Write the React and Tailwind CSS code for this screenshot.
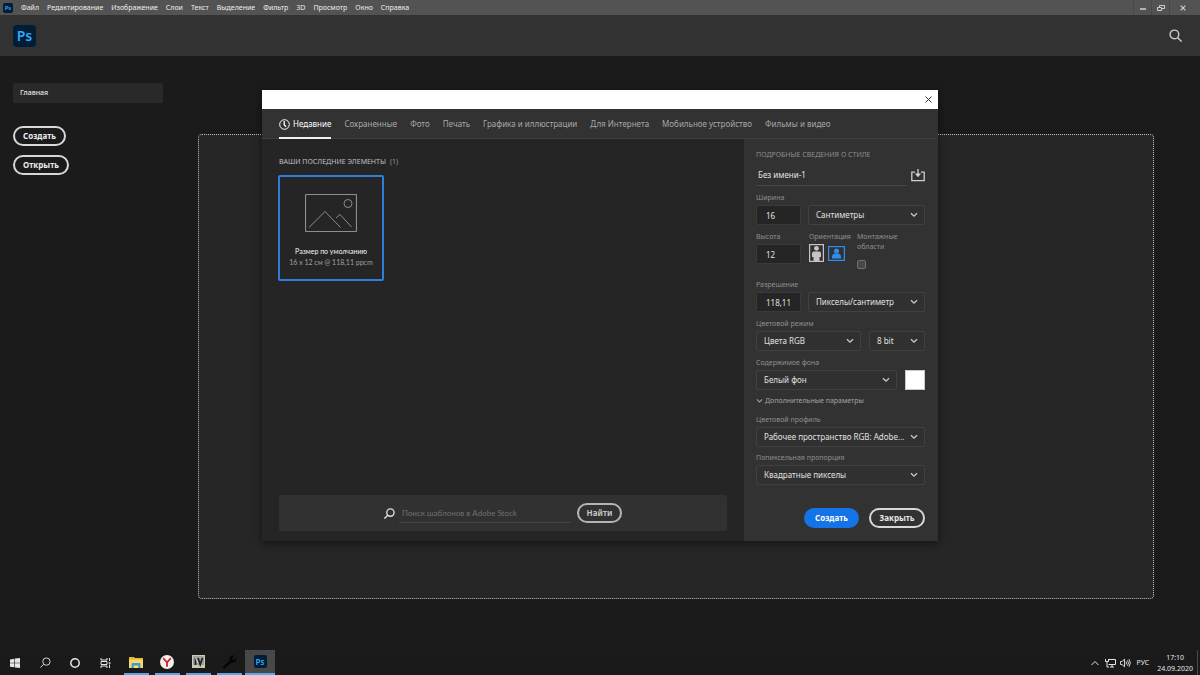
import { useState } from "react";
import clsx from "clsx";

const menuItems = [
  "Файл",
  "Редактирование",
  "Изображение",
  "Слои",
  "Текст",
  "Выделение",
  "Фильтр",
  "3D",
  "Просмотр",
  "Окно",
  "Справка",
];

const tabs = [
  "Недавние",
  "Сохраненные",
  "Фото",
  "Печать",
  "Графика и иллюстрации",
  "Для Интернета",
  "Мобильное устройство",
  "Фильмы и видео",
];

const PsLogo = ({ className }) => (
  <span
    className={clsx(
      "flex items-center justify-center bg-[#001e36] font-semibold leading-none text-[#31a8ff]",
      className
    )}
  >
    Ps
  </span>
);

const Chevron = ({ className }) => (
  <svg className={className} viewBox="0 0 8 6" fill="none" stroke="currentColor" strokeWidth="1.3">
    <path d="M1 1.2l3 3 3-3" />
  </svg>
);

const SearchIcon = ({ className, flip }) => (
  <svg
    className={clsx(className, flip && "-scale-x-100")}
    viewBox="0 0 12 12"
    fill="none"
    stroke="currentColor"
  >
    <circle cx="5" cy="5" r="4" />
    <path d="M8 8l3.6 3.6" />
  </svg>
);

const Label = ({ htmlFor, children }) => (
  <label htmlFor={htmlFor} className="block text-[7px] leading-[10px] text-[#8f8f8f]">
    {children}
  </label>
);

const Select = ({ id, label, className, children }) => (
  <div className={clsx("relative", className)}>
    <select
      id={id}
      aria-label={label}
      className="block h-5 w-full appearance-none rounded-xs border border-[#414141] bg-[#303030] pl-[7px] pr-4 text-[8px] leading-[12px] text-[#e0e0e0]"
    >
      <option>{children}</option>
    </select>
    <Chevron className="pointer-events-none absolute right-[7px] top-[7px] h-[6px] w-2 text-[#cccccc]" />
  </div>
);

const NumberField = ({ id, value }) => (
  <input
    id={id}
    defaultValue={value}
    className="block h-5 w-[45px] rounded-xs border border-[#3a3a3a] bg-[#252525] pl-[9px] text-[8px] leading-[12px] text-[#e0e0e0]"
  />
);

const PillButton = ({ className, children }) => (
  <button
    type="button"
    className={clsx(
      "flex h-5 items-center justify-center rounded-full text-[8px] leading-none font-bold",
      className
    )}
  >
    {children}
  </button>
);

const MenuBar = () => (
  <div className="flex h-[15px] items-center bg-[#535353] pl-[3px] text-[7px] leading-[10px] text-[#eeeeee]">
    <PsLogo className="h-[10px] w-[10px] rounded-xs text-[6px]" />
    <nav className="ml-2 flex gap-2 whitespace-nowrap">
      {menuItems.map((item) => (
        <a key={item} href="#">
          {item}
        </a>
      ))}
    </nav>
    <div className="ml-auto flex h-full pr-[4px] text-[#d0d0d0]">
      <button type="button" aria-label="Свернуть" className="flex w-[18px] items-center justify-center border-l border-[#484848]">
        <svg className="h-2 w-2" viewBox="0 0 8 8" stroke="currentColor" strokeWidth="1.5">
          <path d="M1 5h6" />
        </svg>
      </button>
      <button type="button" aria-label="Развернуть" className="flex w-[18px] items-center justify-center border-l border-[#484848]">
        <svg className="h-2 w-2" viewBox="0 0 8 8" fill="none" stroke="currentColor">
          <path d="M.5 3.500h4v3h-4zM2.500 3.500v-2h5v3h-3" />
        </svg>
      </button>
      <button type="button" aria-label="Закрыть окно" className="flex w-[27px] items-center justify-center border-l border-[#484848]">
        <svg className="h-[6px] w-[6px]" viewBox="0 0 6 6" stroke="currentColor" strokeWidth="1.2">
          <path d="M.7 .7l4.6 4.6M5.3 .7L.7 5.3" />
        </svg>
      </button>
    </div>
  </div>
);

const PresetCard = () => (
  <button
    type="button"
    className="mt-2 -ml-px flex h-[106px] w-[106px] flex-col items-center rounded-xs border-2 border-[#2f7cd9] pt-[17px] font-[Lato,sans-serif] text-[7px] leading-[11px]"
  >
    <svg className="h-[38px] w-[52px]" viewBox="0 0 52 38" fill="none" stroke="#8e8e8e">
      <rect x=".5" y=".5" width="51" height="37" rx="1" strokeWidth="1.2" />
      <circle cx="43" cy="9.500" r="4" />
      <path d="M4 33.500L20 17.500l15.500 16M31 24l4-3.500L46.500 33" />
    </svg>
    <span className="mt-[14px] text-[#f4f4f4]">Размер по умолчанию</span>
    <span className="text-[#a0a0a0]">16 x 12 см @ 118,11 ppcm</span>
  </button>
);

const Details = () => {
  const [orientation, setOrientation] = useState("landscape");

  return (
    <aside className="w-[194px] shrink-0 bg-[#323232] pl-3 pr-[13px] pt-[11px]">
      <h2 className="text-[7px] leading-[10px] text-[#8f8f8f]">ПОДРОБНЫЕ СВЕДЕНИЯ О СТИЛЕ</h2>
      <div className="mt-1 flex items-center justify-between">
        <input
          aria-label="Имя документа"
          defaultValue="Без имени-1"
          className="h-[22px] w-[151px] border-b border-[#464646] bg-transparent pl-[2px] text-[8px] leading-[12px] text-[#e4e4e4]"
        />
        <button type="button" aria-label="Сохранить стиль" className="text-[#cfcfcf]">
          <svg className="h-[13px] w-[14px]" viewBox="0 0 14 13" fill="none" stroke="currentColor" strokeWidth="1.3">
            <path d="M4 3.200H.8v8.500h12.400V3.200H10M7 0v6" />
            <path d="M3.800 4.500h6.400L7 8.200z" fill="currentColor" stroke="none" />
          </svg>
        </button>
      </div>

      <div className="mt-[7px] flex flex-col gap-[7px]">
        <div>
          <Label htmlFor="width">Ширина</Label>
          <div className="mt-[2px] flex justify-between">
            <NumberField id="width" value="16" />
            <Select id="units" label="Единицы измерения" className="w-[117px]">
              Сантиметры
            </Select>
          </div>
        </div>

        <div className="flex h-[41px]">
          <div className="w-[53px]">
            <Label htmlFor="height">Высота</Label>
            <div className="mt-[2px]">
              <NumberField id="height" value="12" />
            </div>
          </div>
          <div className="w-12">
            <span className="block text-[7px] leading-[10px] text-[#8f8f8f]">Ориентация</span>
            <div className="mt-[2px] flex items-center gap-1">
              <button
                type="button"
                aria-label="Книжная"
                onClick={() => setOrientation("portrait")}
                className={orientation === "portrait" ? "text-[#2f8df0]" : "text-[#c4c4c4]"}
              >
                <svg className="h-[18px] w-[15px]" viewBox="0 0 15 18">
                  <rect x=".6" y=".6" width="13.800" height="16.800" fill="none" stroke="currentColor" strokeWidth="1.200" />
                  <circle cx="7.500" cy="4.300" r="2.400" fill="currentColor" />
                  <path d="M3 9.500q0-2 2-2h5q2 0 2 2V13h-1.500v4h-6v-4H3z" fill="currentColor" />
                </svg>
              </button>
              <button
                type="button"
                aria-label="Альбомная"
                onClick={() => setOrientation("landscape")}
                className={orientation === "landscape" ? "text-[#2f8df0]" : "text-[#c4c4c4]"}
              >
                <svg className="h-[15px] w-[17px]" viewBox="0 0 17 15">
                  <rect x=".6" y=".6" width="15.800" height="13.800" fill="none" stroke="currentColor" strokeWidth="1.200" />
                  <circle cx="8.500" cy="5" r="2.500" fill="currentColor" />
                  <path d="M4 12.500V10.500Q4.300 8 6.500 7.500h4Q12.700 8 13 10.500v2z" fill="currentColor" />
                </svg>
              </button>
            </div>
          </div>
          <div className="flex flex-col items-start">
            <Label htmlFor="artboards">
              Монтажные
              <br />
              области
            </Label>
            <input
              id="artboards"
              type="checkbox"
              className="mt-2 h-[9px] w-[9px] appearance-none rounded-xs border border-[#707070] bg-[#484848] checked:bg-[#2f8df0]"
            />
          </div>
        </div>

        <div>
          <Label htmlFor="resolution">Разрешение</Label>
          <div className="mt-[2px] flex justify-between">
            <NumberField id="resolution" value="118,11" />
            <Select id="resolution-units" label="Единицы разрешения" className="w-[117px]">
              Пикселы/сантиметр
            </Select>
          </div>
        </div>

        <div>
          <Label htmlFor="color-mode">Цветовой режим</Label>
          <div className="mt-[2px] flex justify-between">
            <Select id="color-mode" className="w-[105px]">
              Цвета RGB
            </Select>
            <Select id="depth" label="Глубина цвета" className="w-[56px]">
              8 bit
            </Select>
          </div>
        </div>

        <div>
          <Label htmlFor="background">Содержимое фона</Label>
          <div className="mt-[2px] flex justify-between">
            <Select id="background" className="w-[141px]">
              Белый фон
            </Select>
            <button type="button" aria-label="Цвет фона" className="h-5 w-5 border border-[#c8c8c8] bg-white" />
          </div>
        </div>
      </div>

      <button type="button" className="mt-[6px] flex items-center gap-[2px] text-[7px] leading-[10px] text-[#a3a3a3]">
        <Chevron className="h-[6px] w-[7px]" />
        Дополнительные параметры
      </button>

      <div className="mt-[9px] flex flex-col gap-[6px]">
        <div>
          <Label htmlFor="profile">Цветовой профиль</Label>
          <Select id="profile" className="mt-[2px]">
            Рабочее пространство RGB: Adobe...
          </Select>
        </div>
        <div>
          <Label htmlFor="pixel-ratio">Попиксельная пропорция</Label>
          <Select id="pixel-ratio" className="mt-[2px]">
            Квадратные пикселы
          </Select>
        </div>
      </div>

      <div className="mt-[23px] mb-[13px] flex justify-end gap-[10px]">
        <PillButton className="w-[55px] bg-[#1473e6] text-white">Создать</PillButton>
        <PillButton className="w-[56px] border-2 border-[#d8d8d8] text-[#e6e6e6]">Закрыть</PillButton>
      </div>
    </aside>
  );
};

const NewDocumentDialog = () => {
  const [active, setActive] = useState(tabs[0]);

  return (
    <div
      role="dialog"
      aria-label="Новый документ"
      className="absolute left-1/2 top-[90px] w-[676px] -translate-x-1/2 bg-[#252525] shadow-[0_2px_8px_rgba(0,0,0,0.5)]"
    >
      <div className="flex h-[19px] items-center justify-end bg-white pr-[6px]">
        <button type="button" aria-label="Закрыть диалог" className="text-[#333333]">
          <svg className="h-[7px] w-[7px]" viewBox="0 0 7 7" stroke="currentColor">
            <path d="M.5 .5l6 6M6.500 .5l-6 6" />
          </svg>
        </button>
      </div>

      <div className="flex h-[30px] gap-[13px] border-b border-[#3e3e3e] bg-[#323232] pl-[17px] text-[8px] leading-[12px] whitespace-nowrap">
        {tabs.map((tab) => (
          <button
            key={tab}
            type="button"
            onClick={() => setActive(tab)}
            className={clsx(
              "-mb-px flex items-center gap-[3px] border-b-2 pt-[2px]",
              tab === active
                ? "border-[#f0f0f0] text-white"
                : "border-transparent text-[#a8a8a8]"
            )}
          >
            {tab === "Недавние" && (
              <svg className="h-[11px] w-[11px]" viewBox="0 0 11 11" fill="none" stroke="currentColor">
                <circle cx="5.500" cy="5.500" r="4.800" />
                <path d="M5.200 2v3.800l1.800 2" strokeWidth="1.300" />
              </svg>
            )}
            {tab}
          </button>
        ))}
      </div>

      <div className="flex">
        <div className="flex flex-1 flex-col px-[17px] pt-[18px] pb-[10px]">
          <h2 className="flex gap-1 text-[7px] leading-[10px] text-[#c0c0c0]">
            ВАШИ ПОСЛЕДНИЕ ЭЛЕМЕНТЫ <span className="text-[#999999]">(1)</span>
          </h2>
          <PresetCard />
          <form className="mt-auto flex h-9 items-center justify-center rounded-xs bg-[#313131]">
            <SearchIcon flip className="h-[11px] w-[11px] stroke-[1.5] text-[#e0e0e0]" />
            <input
              type="text"
              aria-label="Поиск шаблонов"
              placeholder="Поиск шаблонов в Adobe Stock"
              className="ml-1 h-5 w-[172px] border-b border-[#444444] bg-transparent pl-[3px] font-[Lato,sans-serif] text-[8px] leading-[12px] placeholder:text-[#707070]"
            />
            <PillButton className="ml-[6px] w-[45px] border-2 border-[#b4b4b4] text-[#c4c4c4]">
              Найти
            </PillButton>
          </form>
        </div>
        <Details />
      </div>
    </div>
  );
};

const TaskButton = ({ label, open, active, children }) => (
  <button
    type="button"
    aria-label={label}
    className={clsx(
      "flex h-full w-[30px] flex-col items-center",
      active && "bg-[#484848]"
    )}
  >
    <span className="flex flex-1 items-center">{children}</span>
    {open && <span className={clsx("h-[2px] bg-[#5ba7e6]", active ? "w-full" : "w-[25px]")} />}
  </button>
);

const Taskbar = () => (
  <footer className="flex h-[25px] items-center bg-[#1a1a1a] text-[#e6e6e6]">
    <TaskButton label="Пуск">
      <svg className="h-[10px] w-[10px]" viewBox="0 0 10 10" fill="currentColor">
        <path d="M0 1.400l4.400-.7v4H0zM5 .6L10 0v4.700H5zM0 5.300h4.400v4L0 8.700zM5 5.300h5V10L5 9.400z" />
      </svg>
    </TaskButton>
    <TaskButton label="Поиск">
      <SearchIcon flip className="h-[11px] w-[11px]" />
    </TaskButton>
    <TaskButton label="Кортана">
      <svg className="h-[10px] w-[10px]" viewBox="0 0 10 10" fill="none" stroke="currentColor" strokeWidth="1.500">
        <circle cx="5" cy="5" r="4.200" />
      </svg>
    </TaskButton>
    <TaskButton label="Представление задач">
      <svg className="h-[10px] w-[11px]" viewBox="0 0 11 10" fill="none" stroke="currentColor">
        <path d="M1 0v2h6V0M1 10V8h6v2M1 3.500h6v3H1zM9.500 0v3M9.500 6.500V10" />
        <path d="M8.700 5h1.800" strokeWidth="1.500" />
      </svg>
    </TaskButton>
    <div className="ml-px flex h-full gap-px">
      <TaskButton label="Проводник" open>
        <svg className="h-3 w-[14px]" viewBox="0 0 14 12">
          <path d="M0 1h5l1 1h8v10H0z" fill="#e9b53b" />
          <path d="M0 3.500h14V12H0z" fill="#fbd868" />
          <path d="M2.500 12V8q0-1 1-1h7q1 0 1 1v4H9.300V9.500H4.700V12z" fill="#3a9bd9" />
        </svg>
      </TaskButton>
      <TaskButton label="Яндекс" open>
        <svg className="h-[14px] w-[14px]" viewBox="0 0 14 14">
          <circle cx="7" cy="7" r="7" fill="#f4f0ee" />
          <path d="M3.200 3.200L7 7.500l3.800-4.300M7 7v4.800" fill="none" stroke="#d0202a" strokeWidth="1.800" />
        </svg>
      </TaskButton>
      <TaskButton label="GTA IV" open>
        <svg className="h-[13px] w-[13px]" viewBox="0 0 13 13">
          <rect width="13" height="13" fill="#c9cbb4" />
          <rect x="1" y="1" width="11" height="9" fill="#9ea29a" />
          <path d="M3.500 3v7M6 3l2.200 6.500L10.500 3" fill="none" stroke="#20242a" strokeWidth="1.800" />
          <path d="M3.500 3l2.500 5" stroke="#e8e8e0" />
        </svg>
      </TaskButton>
      <TaskButton label="Инструменты" open>
        <svg className="h-[15px] w-[15px]" viewBox="0 0 15 15">
          <path
            d="M1.200 12.200L7.300 7Q6.700 4 8.800 2.300 10.500 1 12.300 1.600L10.300 3.800l.5 1.700 1.700.5 2-2q.5 2.200-1.200 3.800-1.700 1.500-4 .9L3 14.300Q2 14.700 1.300 14T1.200 12.200z"
            fill="#060606"
          />
        </svg>
      </TaskButton>
      <TaskButton label="Photoshop" open active>
        <PsLogo className="h-[13px] w-[13px] rounded-xs text-[8px]" />
      </TaskButton>
    </div>

    <div className="ml-auto flex h-full items-center text-[7px] leading-[11px]">
      <svg className="h-[6px] w-2" viewBox="0 0 8 6" fill="none" stroke="currentColor">
        <path d="M.5 5L4 1.500 7.500 5" />
      </svg>
      <svg className="ml-[6px] h-[10px] w-[11px]" viewBox="0 0 11 10" fill="none" stroke="currentColor">
        <path d="M3.500 1.500h7v5h-7M5 9h4M7 6.500V9M.5 1v2.500h3V1M2 3.500V9h2" />
      </svg>
      <svg className="ml-1 h-[10px] w-[11px]" viewBox="0 0 11 10" fill="none" stroke="currentColor" strokeWidth=".9">
        <path d="M.5 3.500h1.500L4.500 1.200v7.600L2 6.500H.5zM6 3.500q1 1.500 0 3M7.500 2.300q2 2.700 0 5.400M9 1.200q2.800 3.800 0 7.600" />
      </svg>
      <span className="ml-[6px]">РУС</span>
      <span className="ml-2 text-center">
        17:10
        <br />
        24.09.2020
      </span>
      <span className="ml-1 mr-[2px] h-full border-l border-[#4a4a4a]" />
    </div>
  </footer>
);

const App = () => {
  return (
    <div className="relative flex min-h-screen flex-col bg-[#1b1b1b] font-['Noto_Sans',sans-serif]">
      <MenuBar />
      <header className="flex h-[41px] items-center justify-between bg-[#323232] pl-[13px] pr-[18px]">
        <PsLogo className="h-[22px] w-[23px] rounded-sm text-[14px]" />
        <button type="button" aria-label="Поиск" className="text-[#cccccc]">
          <SearchIcon className="h-[13px] w-[13px] stroke-[1.3]" />
        </button>
      </header>

      <main className="flex flex-1">
        <div className="flex w-[198px] shrink-0 flex-col items-start pl-[13px] pt-[27px]">
          <a
            href="#"
            className="flex h-5 w-[150px] items-center rounded-xs bg-[#292929] pl-[7px] text-[7px] leading-[10px] font-medium text-[#e6e6e6]"
          >
            Главная
          </a>
          <PillButton className="mt-[23px] w-[53px] border-2 border-[#d8d8d8] text-[#ececec]">
            Создать
          </PillButton>
          <PillButton className="mt-[9px] w-[56px] border-2 border-[#d8d8d8] text-[#ececec]">
            Открыть
          </PillButton>
        </div>
        <div className="mt-[78px] mr-[46px] mb-[51px] flex-1 rounded-sm border border-dotted border-[#c0c0c0] bg-[#262626]" />
      </main>

      <Taskbar />
      <NewDocumentDialog />
    </div>
  );
};

export default App;
